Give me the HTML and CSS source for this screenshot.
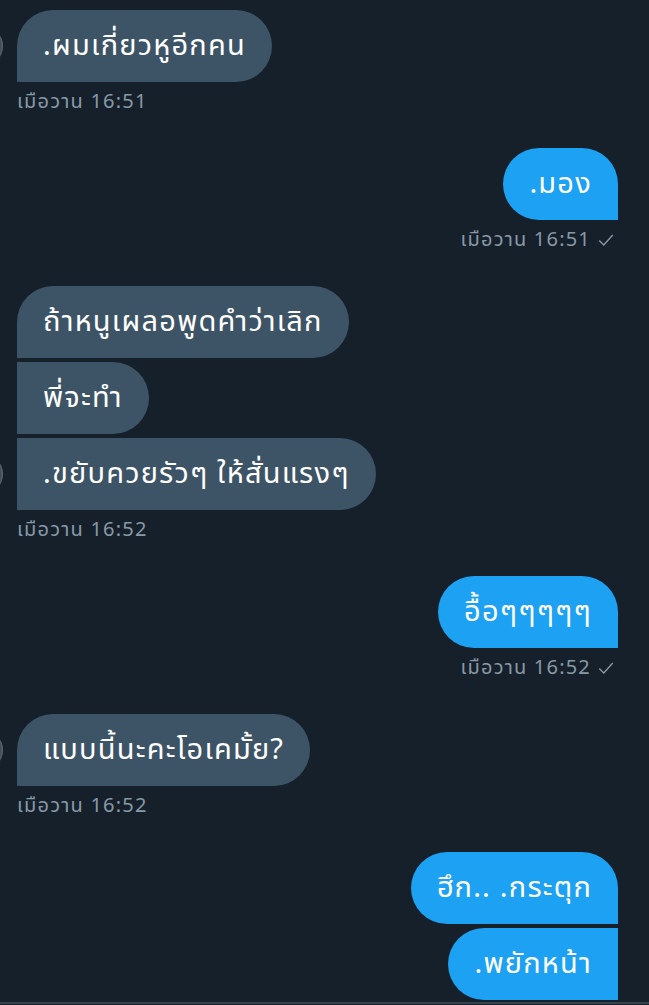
FILE: index.html
```html
<!DOCTYPE html>
<html lang="th">
<head>
  <meta charset="UTF-8">
  <meta name="viewport" content="width=device-width, initial-scale=1.0">
  <title>Messages</title>
  <link rel="stylesheet" href="styles.css">
</head>
<body>
  <div class="chat">
    <div class="group in">
      <div class="row"><span class="avatar"></span><div class="bubble first last">.ผมเกี่ยวหูอีกคน</div></div>
      <div class="time">เมือวาน 16:51</div>
    </div>

    <div class="group out">
      <div class="bubble first last">.มอง</div>
      <div class="time">เมือวาน 16:51 <svg class="check" viewBox="0 0 16 16"><path d="M2 8.5l4 4L14 3.5"/></svg></div>
    </div>

    <div class="group in">
      <div class="row"><span class="spacer"></span><div class="bubble first">ถ้าหนูเผลอพูดคำว่าเลิก</div></div>
      <div class="row"><span class="spacer"></span><div class="bubble">พี่จะทำ</div></div>
      <div class="row"><span class="avatar"></span><div class="bubble last">.ขยับควยรัวๆ ให้สั่นแรงๆ</div></div>
      <div class="time">เมือวาน 16:52</div>
    </div>

    <div class="group out">
      <div class="bubble first last">อื้อๆๆๆๆๆ</div>
      <div class="time">เมือวาน 16:52 <svg class="check" viewBox="0 0 16 16"><path d="M2 8.5l4 4L14 3.5"/></svg></div>
    </div>

    <div class="group in">
      <div class="row"><span class="avatar"></span><div class="bubble first last">แบบนี้นะคะโอเคมั้ย?</div></div>
      <div class="time">เมือวาน 16:52</div>
    </div>

    <div class="group out">
      <div class="bubble first">ฮึก.. .กระตุก</div>
      <div class="bubble last">.พยักหน้า</div>
    </div>
  </div>

  <div class="composer"></div>
</body>
</html>
```

FILE: styles.css
```css
body {
  margin: 0;
  padding: 0;
  background-color: #15202b;
  font-family: "Noto Sans Thai", "Noto Sans", "DejaVu Sans", sans-serif;
  color: #fff;
  overflow: hidden;
}

.chat {
  padding: 10px 31px 0 0;
}

.group {
  display: flex;
  flex-direction: column;
  gap: 4px;
  margin-bottom: 34px;
}

.group.out {
  align-items: flex-end;
}

.group:last-child {
  margin-bottom: 0;
}

.row {
  display: flex;
  align-items: center;
}

.avatar,
.spacer {
  flex: none;
  width: 40px;
  height: 40px;
  margin-left: -37px;
  margin-right: 14px;
  border-radius: 50%;
}

.avatar {
  background: radial-gradient(circle at 30% 50%, #2a3540 0 70%, #9aa3ab 92%);
}

.bubble {
  font-size: 29px;
  line-height: 36px;
  letter-spacing: 1.2px;
  padding: 18px 26px;
  white-space: nowrap;
}

.in .bubble {
  background-color: #3d5466;
  border-radius: 0 36px 36px 0;
}

.in .bubble.first {
  border-top-left-radius: 36px;
}

.out .bubble {
  background-color: #1da1f2;
  border-radius: 36px 0 0 36px;
}

.out .bubble.first {
  border-top-right-radius: 36px;
}

.time {
  margin-top: 4px;
  font-size: 20px;
  line-height: 24px;
  letter-spacing: 1.2px;
  color: #8899a6;
  display: flex;
  align-items: center;
  gap: 6px;
}

.in .time {
  padding-left: 17px;
}

.out .time {
  margin-right: 3px;
}

.check {
  width: 18px;
  height: 18px;
  fill: none;
  stroke: #8899a6;
  stroke-width: 1.2;
}

.composer {
  margin-top: 2px;
  height: 40px;
  border-top: 2px solid #38444d;
}
```
